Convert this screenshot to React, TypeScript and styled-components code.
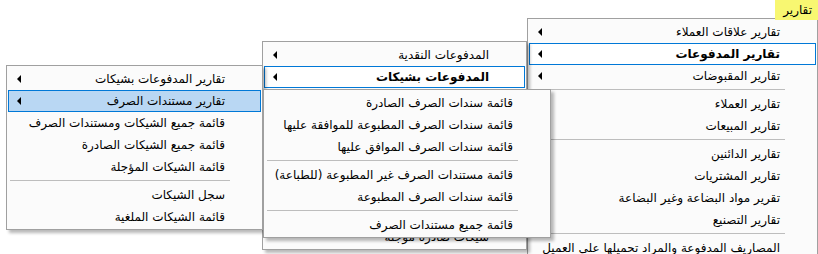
import styled, { createGlobalStyle } from "styled-components";

const GlobalStyle = createGlobalStyle`
  body {
    margin: 0;
    background: #ffffff;
    font-family: Tahoma, "DejaVu Sans", sans-serif;
  }
`;

const Screen = styled.div`
  position: relative;
  width: 818px;
  height: 254px;
  overflow: hidden;
  background: #ffffff;
`;

const MenuBar = styled.div`
  display: flex;
  justify-content: flex-end;
  height: 18px;
`;

const BarTab = styled.div`
  position: relative;
  z-index: 10;
  height: 20px;
  padding: 0 6px 0 8px;
  display: flex;
  align-items: center;
  background: #f8f771;
  color: #000;
  font-size: 12px;
  direction: rtl;
`;

// popup menus lie over each other, so they are placed on the screen
const Popup = styled.div<{ $left: number; $top: number; $width: number; $z: number; $shadow?: boolean }>`
  position: absolute;
  left: ${(p) => p.$left}px;
  top: ${(p) => p.$top}px;
  width: ${(p) => p.$width}px;
  z-index: ${(p) => p.$z};
  box-sizing: border-box;
  display: flex;
  flex-direction: column;
  padding: 2px 0 1px;
  background: #fbfbfb;
  border: 1px solid #a0a0a0;
  direction: rtl;
  box-shadow: ${(p) => (p.$shadow ? "3px 3px 3px rgba(0, 0, 0, 0.28)" : "none")};
`;

const Item = styled.div<{ $mode?: "focus" | "selected"; $bold?: boolean }>`
  display: flex;
  align-items: center;
  height: 22px;
  box-sizing: border-box;
  margin: 0 1px;
  padding: 0 35px 0 8px;
  border: 1px solid ${(p) => (p.$mode ? "#0078d7" : "transparent")};
  background: ${(p) =>
    p.$mode === "selected" ? "#b9d7f3" : p.$mode === "focus" ? "#ffffff" : "transparent"};
  color: #000;
  font-size: 12px;
  font-weight: ${(p) => (p.$bold ? 700 : 400)};
  white-space: nowrap;
`;

// $ltr: the original app draws this caption with left-to-right reading order
const Label = styled.span<{ $ltr?: boolean }>`
  flex: 1;
  text-align: right;
  direction: ${(p) => (p.$ltr ? "ltr" : "rtl")};
`;

const Arrow = styled.span`
  width: 0;
  height: 0;
  border-top: 4px solid transparent;
  border-bottom: 4px solid transparent;
  border-right: 4px solid #000;
`;

const Separator = styled.div`
  height: 1px;
  margin: 2px 32px 3px 3px;
  background: #bdbdbd;
`;

type Entry =
  | { text: string; sub?: boolean; mode?: "focus" | "selected"; bold?: boolean; ltr?: boolean }
  | "-";

function MenuList({ entries }: { entries: Entry[] }) {
  return (
    <>
      {entries.map((e, i) =>
        e === "-" ? (
          <Separator key={i} />
        ) : (
          <Item key={i} $mode={e.mode} $bold={e.bold}>
            <Label $ltr={e.ltr}>{e.text}</Label>
            {e.sub && <Arrow />}
          </Item>
        )
      )}
    </>
  );
}

const reports: Entry[] = [
  { text: "تقارير علاقات العملاء", sub: true },
  { text: "تقارير المدفوعات", sub: true, mode: "focus", bold: true },
  { text: "تقارير المقبوضات", sub: true },
  "-",
  { text: "تقارير العملاء" },
  { text: "تقارير المبيعات" },
  "-",
  { text: "تقارير الدائنين" },
  { text: "تقارير المشتريات" },
  { text: "تقرير مواد البضاعة وغير البضاعة" },
  { text: "تقارير التصنيع" },
  "-",
  { text: "المصاريف المدفوعة والمراد تحميلها على العميل" },
];

const payments: Entry[] = [
  { text: "المدفوعات النقدية", sub: true },
  { text: "المدفوعات بشيكات", sub: true, mode: "focus", bold: true },
  { text: "المدفوعات بالتحويل البنكي" },
  { text: "المدفوعات حسب المورد" },
  { text: "المدفوعات حسب الحساب" },
  { text: "المدفوعات اليومية" },
  "-",
  { text: "شيكات صادرة" },
  { text: "شيكات صادرة مستحقة" },
  { text: "شيكات صادرة مؤجلة" },
];

const cheques: Entry[] = [
  { text: "تقارير المدفوعات بشيكات", sub: true },
  { text: "تقارير مستندات الصرف", sub: true, mode: "selected" },
  { text: "قائمة جميع الشيكات ومستندات الصرف" },
  { text: "قائمة جميع الشيكات الصادرة" },
  { text: "قائمة الشيكات المؤجلة" },
  "-",
  { text: "سجل الشيكات" },
  { text: "قائمة الشيكات الملغية" },
];

const vouchers: Entry[] = [
  { text: "قائمة سندات الصرف الصادرة" },
  { text: "قائمة سندات الصرف المطبوعة للموافقة عليها" },
  { text: "قائمة سندات الصرف الموافق عليها" },
  "-",
  { text: "قائمة مستندات الصرف غير المطبوعة (للطباعة)", ltr: true },
  { text: "قائمة سندات الصرف المطبوعة" },
  "-",
  { text: "قائمة جميع مستندات الصرف" },
];

export default function App() {
  return (
    <Screen>
      <GlobalStyle />
      <MenuBar>
        <BarTab>تقارير</BarTab>
      </MenuBar>
      <Popup $left={527} $top={18} $width={291} $z={1}>
        <MenuList entries={reports} />
      </Popup>
      <Popup $left={262} $top={41} $width={265} $z={2} $shadow>
        <MenuList entries={payments} />
      </Popup>
      <Popup $left={6} $top={65} $width={257} $z={3} $shadow>
        <MenuList entries={cheques} />
      </Popup>
      <Popup $left={263} $top={89} $width={288} $z={4} $shadow>
        <MenuList entries={vouchers} />
      </Popup>
    </Screen>
  );
}
